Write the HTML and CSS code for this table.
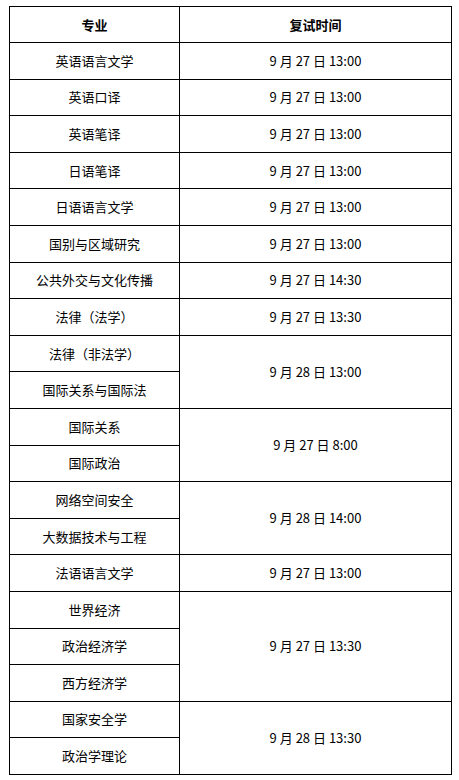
FILE: index.html
```html
<!DOCTYPE html>
<html lang="zh-CN">
<head>
<meta charset="utf-8">
<link rel="stylesheet" href="styles.css">
</head>
<body>
<table class="schedule">
  <thead>
    <tr class="head"><th class="c1">专业</th><th class="c2">复试时间</th></tr>
  </thead>
  <tbody>
    <tr><td>英语语言文学</td><td>9 月 27 日 13:00</td></tr>
    <tr><td>英语口译</td><td>9 月 27 日 13:00</td></tr>
    <tr><td>英语笔译</td><td>9 月 27 日 13:00</td></tr>
    <tr><td>日语笔译</td><td>9 月 27 日 13:00</td></tr>
    <tr><td>日语语言文学</td><td>9 月 27 日 13:00</td></tr>
    <tr><td>国别与区域研究</td><td>9 月 27 日 13:00</td></tr>
    <tr><td>公共外交与文化传播</td><td>9 月 27 日 14:30</td></tr>
    <tr><td>法律（法学）</td><td>9 月 27 日 13:30</td></tr>
    <tr><td>法律（非法学）</td><td rowspan="2">9 月 28 日 13:00</td></tr>
    <tr><td>国际关系与国际法</td></tr>
    <tr><td>国际关系</td><td rowspan="2">9 月 27 日 8:00</td></tr>
    <tr><td>国际政治</td></tr>
    <tr><td>网络空间安全</td><td rowspan="2">9 月 28 日 14:00</td></tr>
    <tr><td>大数据技术与工程</td></tr>
    <tr><td>法语语言文学</td><td>9 月 27 日 13:00</td></tr>
    <tr><td>世界经济</td><td rowspan="3">9 月 27 日 13:30</td></tr>
    <tr><td>政治经济学</td></tr>
    <tr><td>西方经济学</td></tr>
    <tr><td>国家安全学</td><td rowspan="2">9 月 28 日 13:30</td></tr>
    <tr><td>政治学理论</td></tr>
  </tbody>
</table>
</body>
</html>
```
FILE: styles.css
```css
html, body {
  margin: 0;
  padding: 0;
  background: #fff;
}
body {
  padding: 6px 0 0 9px;
  font-family: "Noto Sans CJK SC", "DejaVu Sans", sans-serif;
  font-size: 13px;
  color: #000;
}
.schedule {
  border-collapse: collapse;
  table-layout: fixed;
  width: 443px;
}
.schedule th,
.schedule td {
  border: 1px solid #000;
  padding: 0;
  text-align: center;
  vertical-align: middle;
  line-height: 16px;
}
.schedule th {
  font-weight: bold;
}
.schedule .c1 {
  width: 169px;
}
.schedule .head {
  height: 36px;
}
.schedule tbody tr {
  height: 36.6px;
}
```
